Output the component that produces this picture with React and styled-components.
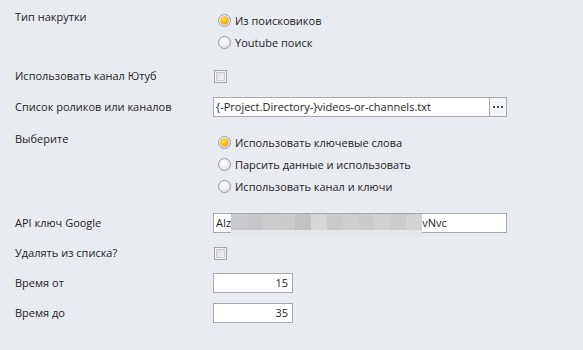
import React from "react";
import styled, { createGlobalStyle } from "styled-components";

const Global = createGlobalStyle`
  html, body { margin: 0; padding: 0; background: #e8ebf0; }
  body { font-family: "Open Sans", "Noto Sans", sans-serif; font-size: 11px; color: #1e1e1e; }
`;

const Page = styled.div`
  width: 583px;
  height: 350px;
  box-sizing: border-box;
  padding: 9px 0 0 15px;
  display: flex;
  flex-direction: column;
  background: #e8ebf0;
  overflow: hidden;
`;

const Row = styled.div`
  display: grid;
  grid-template-columns: 198px 1fr;
  align-items: ${(p) => (p.$top ? "start" : "center")};
  margin-top: ${(p) => p.$mt || 0}px;
`;

const Label = styled.div`
  line-height: 16px;
  white-space: nowrap;
`;

const RadioGroup = styled.div`
  display: flex;
  flex-direction: column;
  padding-left: 5px;
`;

const RadioItem = styled.label`
  display: flex;
  align-items: center;
  height: 22px;
  gap: 4px;
  white-space: nowrap;
`;

const RadioCircle = styled.span`
  width: 13px;
  height: 13px;
  box-sizing: border-box;
  border-radius: 50%;
  border: 1px solid #9a9da2;
  background: radial-gradient(circle at 40% 35%, #ffffff 0%, #f0f0f0 45%, #cfd1d4 100%);
  display: flex;
  align-items: center;
  justify-content: center;
  flex: none;
  &::after {
    content: "";
    display: ${(p) => (p.$checked ? "block" : "none")};
    width: 7px;
    height: 7px;
    border-radius: 50%;
    background: radial-gradient(circle at 40% 35%, #ffe44a 0%, #f6b800 55%, #d98f00 100%);
    box-shadow: 0 0 0 0.5px #c88a00;
  }
`;

const Check = styled.span`
  width: 13px;
  height: 13px;
  box-sizing: border-box;
  border: 1px solid #a2a6ac;
  background: #f4f4f4;
  margin-left: 1px;
  display: flex;
  align-items: center;
  justify-content: center;
  &::after {
    content: "";
    width: 7px;
    height: 7px;
    border: 1px solid #c9cbce;
    background: linear-gradient(135deg, #dcdcdc, #f4f4f4);
  }
`;

const Field = styled.div`
  width: ${(p) => p.$w}px;
  height: 20px;
  box-sizing: border-box;
  border: 1px solid #a6a9ae;
  background: #fff;
  display: flex;
  align-items: center;
  justify-content: ${(p) => (p.$right ? "flex-end" : "flex-start")};
  padding: ${(p) => (p.$right ? "0 4px 0 0" : "0 0 0 2px")};
  line-height: 18px;
  white-space: nowrap;
  position: relative;
`;

const FieldText = styled.span`
  flex: ${(p) => (p.$grow ? 1 : "none")};
  overflow: hidden;
`;

const DotsButton = styled.div`
  width: 16px;
  align-self: stretch;
  border-left: 1px solid #a6a9ae;
  background: #f3f4f6;
  display: flex;
  align-items: center;
  justify-content: center;
  gap: 2px;
`;

const Dot = styled.span`
  width: 2px;
  height: 2px;
  background: #4a4d52;
`;

const Blur = styled.div`
  align-self: flex-start;
  width: 191px;
  height: 23px;
  flex: none;
  display: flex;
  flex-direction: column;
  position: relative;
  z-index: 1;
`;

const BlurBlocks = styled.div`
  display: flex;
  height: 16px;
`;

const BlurBlock = styled.span`
  flex: 1;
  background: ${(p) => p.$c};
`;

const BlurStrip = styled.div`
  height: 7px;
  background: #e4e7eb;
`;

const blurColors = [
  "#c9cacd", "#c6c7ca", "#cdcdce", "#cbcbcc", "#c2c2c3", "#d6d6d6",
  "#cacaca", "#cfcfcf", "#cbcbcb", "#d1d1d1", "#cccccc", "#d3d3d3",
];

function Radio({ checked, children }) {
  return (
    <RadioItem>
      <RadioCircle $checked={checked} />
      <span>{children}</span>
    </RadioItem>
  );
}

export default function App() {
  return (
    <>
      <Global />
      <Page>
        <Row $top>
          <Label>Тип накрутки</Label>
          <RadioGroup>
            <Radio checked>Из поисковиков</Radio>
            <Radio>Youtube поиск</Radio>
          </RadioGroup>
        </Row>
        <Row $mt={15} style={{ height: 16 }}>
          <Label>Использовать канал Ютуб</Label>
          <Check />
        </Row>
        <Row $mt={13}>
          <Label>Список роликов или каналов</Label>
          <Field $w={294}>
            <FieldText $grow>{"{-Project.Directory-}videos-or-channels.txt"}</FieldText>
            <DotsButton>
              <Dot />
              <Dot />
              <Dot />
            </DotsButton>
          </Field>
        </Row>
        <Row $mt={14} $top>
          <Label>Выберите</Label>
          <RadioGroup>
            <Radio checked>Использовать ключевые слова</Radio>
            <Radio>Парсить данные и использовать</Radio>
            <Radio>Использовать канал и ключи</Radio>
          </RadioGroup>
        </Row>
        <Row $mt={16}>
          <Label>API ключ Google</Label>
          <Field $w={294} style={{ overflow: "visible" }}>
            <FieldText>AIz</FieldText>
            <Blur>
              <BlurBlocks>
                {blurColors.map((c, i) => (
                  <BlurBlock key={i} $c={c} />
                ))}
              </BlurBlocks>
              <BlurStrip />
            </Blur>
            <FieldText>vNvc</FieldText>
          </Field>
        </Row>
        <Row $mt={12} style={{ height: 16 }}>
          <Label>Удалять из списка?</Label>
          <Check />
        </Row>
        <Row $mt={12}>
          <Label>Время от</Label>
          <Field $w={80} $right>15</Field>
        </Row>
        <Row $mt={10}>
          <Label>Время до</Label>
          <Field $w={80} $right>35</Field>
        </Row>
      </Page>
    </>
  );
}
